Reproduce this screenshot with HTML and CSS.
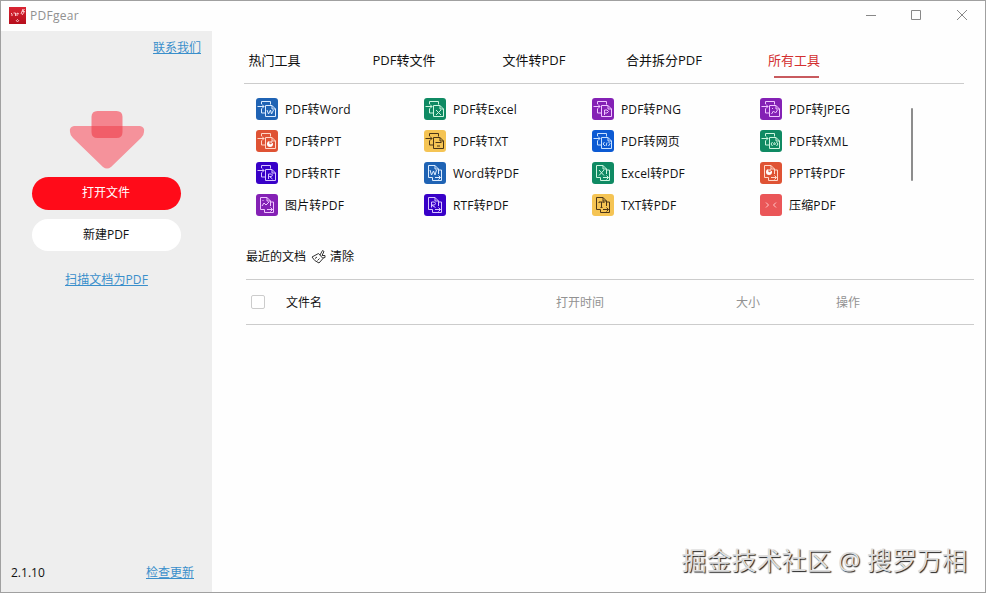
FILE: index.html
```
<!DOCTYPE html>
<html lang="zh-CN">
<head>
<meta charset="utf-8">
<title>PDFgear</title>
<link rel="stylesheet" href="styles.css">
</head>
<body>
<svg class="defs" aria-hidden="true">
  <symbol id="from-pdf" viewBox="0 0 22 22"><path d="M5.500 6V3.500H14.500V6.500M1.500 8.500H8M6 6.500l2 2-2 2M5.500 10.500v4.500h4M9.500 7.500H16L19.500 11V18.500H9.500ZM16 7.500V11h3.500"/></symbol>
  <symbol id="to-pdf" viewBox="0 0 22 22"><path d="M8.500 15.500H4.500V3.500H11L14.500 7V12M11 3.500V7h3.500M14.500 8h3V18.500H8.500V15.500M11 15.500h5.500M14.500 13.500l2 2-2 2"/></symbol>
</svg>
<div class="window">
  <header class="titlebar">
    <svg class="logo" viewBox="0 0 17 17"><defs><linearGradient id="lg" x2="0" y2="1"><stop stop-color="#d92532"/><stop offset="1" stop-color="#b60e1c"/></linearGradient></defs><path fill="url(#lg)" d="M0 0h17v17H0z"/><path d="M2 6l1 1v2M4.500 6h2v3M8 9V6l2 1M12 7l2-5M15.500 2l-2 2.500h2L13 8M8.500 12.500l1.200 1.200-1.200 1.200-1.200-1.200Z" fill="none" stroke="#ffdce0" stroke-width=".9"/></svg>
    <span class="app-name">PDFgear</span>
    <svg class="controls" viewBox="0 0 104 12"><path d="M0 6.500h10M45.500 1.500h9v9h-9zM91 1l10 10M101 1L91 11"/></svg>
  </header>
  <div class="body">
    <aside class="sidebar">
      <a class="link contact">联系我们</a>
      <svg class="arrow" viewBox="0 0 76 60"><path d="M5 16H71Q76 17 75 22Q75 25 72 28L42 57Q38 60 34 57L4 28Q1 25 1 22Q0 17 5 16Z" fill="#f5929b"/><rect x="22.500" y="1" width="31" height="15" rx="0" fill="none"/><path d="M28.500 1h19q6 0 6 6v9h-31V7q0-6 6-6Z" fill="#f4858f"/><path d="M22.500 16h31v6q0 6-6 6h-19q-6 0-6-6Z" fill="#f15e69"/></svg>
      <button class="btn open">打开文件</button>
      <button class="btn create">新建PDF</button>
      <a class="link scan">扫描文档为PDF</a>
      <div class="foot"><span>2.1.10</span><a class="link">检查更新</a></div>
    </aside>
    <main class="main">
      <nav class="tabs"><span>热门工具</span><span>PDF转文件</span><span>文件转PDF</span><span>合并拆分PDF</span><span class="active">所有工具</span></nav>
      <section class="tools">
        <div class="grid">
          <div class="tool"><svg class="ico word" viewBox="0 0 22 22"><use href="#from-pdf"/><path d="M11 12l1.500 4 2-4 1 4 2-4"/></svg><span>PDF转Word</span></div>
          <div class="tool"><svg class="ico excel" viewBox="0 0 22 22"><use href="#from-pdf"/><path d="M12 12l5 5M17 12l-5 5"/></svg><span>PDF转Excel</span></div>
          <div class="tool"><svg class="ico image" viewBox="0 0 22 22"><use href="#from-pdf"/><path d="M12.500 17v-5H15l1.500 1.500L15 15h-2.500"/></svg><span>PDF转PNG</span></div>
          <div class="tool"><svg class="ico image" viewBox="0 0 22 22"><use href="#from-pdf"/><path d="M11.500 16l2-3 2 2 2-3M12 10.500h1"/></svg><span>PDF转JPEG</span></div>
          <div class="tool"><svg class="ico ppt" viewBox="0 0 22 22"><use href="#from-pdf"/><circle class="solid" cx="14" cy="14" r="3"/><path class="cut" d="M14 14V10.500M14 14l3.500-2"/></svg><span>PDF转PPT</span></div>
          <div class="tool"><svg class="ico txt" viewBox="0 0 22 22"><use href="#from-pdf"/><path d="M11.500 12.500h6M13 16h3"/></svg><span>PDF转TXT</span></div>
          <div class="tool"><svg class="ico web" viewBox="0 0 22 22"><use href="#from-pdf"/><path d="M12.500 12L11 14l2 2M16.500 12l1.500 1.500-1.500 2.500M15 12.500L14 16"/></svg><span>PDF转网页</span></div>
          <div class="tool"><svg class="ico excel" viewBox="0 0 22 22"><use href="#from-pdf"/><path d="M12.500 12L11 14l1.500 2M16.500 12l1.500 2-1.500 2M14.500 12.500l-1 1.500 1 1 1-1z"/></svg><span>PDF转XML</span></div>
          <div class="tool"><svg class="ico rtf" viewBox="0 0 22 22"><use href="#from-pdf"/><path d="M12.500 17v-5h3l1 1-1 1.500h-2l3 2.500"/></svg><span>PDF转RTF</span></div>
          <div class="tool"><svg class="ico word" viewBox="0 0 22 22"><use href="#to-pdf"/><path d="M6 8l1.500 5L9.500 9l1.500 4 1.500-5"/></svg><span>Word转PDF</span></div>
          <div class="tool"><svg class="ico excel" viewBox="0 0 22 22"><use href="#to-pdf"/><path d="M7 8l5 5.500M12 8l-5 5.500"/></svg><span>Excel转PDF</span></div>
          <div class="tool"><svg class="ico ppt" viewBox="0 0 22 22"><use href="#to-pdf"/><circle class="solid" cx="9" cy="10" r="3"/><path class="cut" d="M9 10V7M9 10l3-2"/></svg><span>PPT转PDF</span></div>
          <div class="tool"><svg class="ico image" viewBox="0 0 22 22"><use href="#to-pdf"/><path d="M6 12l2-3 2 2 3-3M6.500 6.500h1"/></svg><span>图片转PDF</span></div>
          <div class="tool"><svg class="ico rtf" viewBox="0 0 22 22"><use href="#to-pdf"/><path d="M7.500 13.500V8h3l1 1.500-1 1.500h-3l4 2.500"/></svg><span>RTF转PDF</span></div>
          <div class="tool"><svg class="ico txt" viewBox="0 0 22 22"><use href="#to-pdf"/><path d="M7 9V8h5v1M9.500 8v5.500M8.500 13.500h2"/></svg><span>TXT转PDF</span></div>
          <div class="tool"><svg class="ico zip" viewBox="0 0 22 22"><path d="M6 8.500L8.500 11 6 13.500M16 8.500L13.500 11l2.500 2.500"/></svg><span>压缩PDF</span></div>
        </div>
        <div class="scroll"></div>
      </section>
      <div class="recent">最近的文档<svg class="broom" viewBox="0 0 16 16"><path d="M1 8L7.500 4.500l4.500 5L8 14Q3 12 1 8ZM9 6L11.500 1.500l1.500 1-2 4L14 6.500v2l-2.500.5M4 9.500L6 8M6.500 11.500L8.500 9.500"/></svg>清除</div>
      <div class="thead"><span class="check"></span><span class="name">文件名</span><span>打开时间</span><span>大小</span><span>操作</span></div>
    </main>
  </div>
  <div class="watermark">掘金技术社区 @ 搜罗万相</div>
</div>
</body>
</html>
```
FILE: styles.css
```
* { box-sizing: border-box; }
body {
  margin: 0;
  font: 12px/20px "Open Sans", "Noto Sans CJK SC", sans-serif;
  color: #111;
}
.defs { position: absolute; width: 0; height: 0; }
.window {
  position: relative;
  display: flex;
  flex-direction: column;
  width: 986px;
  height: 593px;
  border: 1px solid #a0a0a0;
  background: #fefefe;
}
.titlebar { display: flex; align-items: center; height: 30px; padding: 0 15px 0 8px; }
.logo { width: 17px; height: 17px; margin-top: -2px; }
.app-name { margin-left: 4px; color: #909090; letter-spacing: .3px; }
.controls { width: 104px; height: 12px; margin: -2px 0 0 auto; fill: none; stroke: #888; }
.body { display: flex; flex: 1; }
.sidebar {
  display: flex;
  flex-direction: column;
  align-items: center;
  width: 211px;
  padding: 7px 0 9px;
  background: #eee;
}
.link { color: #3a8fcb; text-decoration: underline; text-underline-offset: 1px; }
.contact { align-self: flex-end; margin-right: 11px; }
.arrow { width: 76px; height: 60px; margin-top: 52px; }
.btn {
  width: 149px;
  height: 33px;
  padding: 0 1px 1px 0;
  border: 0;
  border-radius: 17px;
  font: inherit;
}
.open { margin-top: 7px; background: #ff0b19; color: #fff; }
.create { height: 32px; margin-top: 9px; padding-bottom: 0; background: #fff; color: #111; }
.scan { margin-top: 19px; letter-spacing: .1px; }
.foot { display: flex; justify-content: space-between; width: 100%; margin-top: auto; padding: 0 18px 0 10px; }
.main { flex: 1; padding-left: 32px; }
.tabs {
  display: flex;
  width: 720px;
  height: 53px;
  padding-top: 19px;
  border-bottom: 1px solid #ccc;
  font-size: 13px;
}
.tabs span { width: 130px; flex: none; text-align: center; white-space: nowrap; }
.tabs span:first-child { width: 95px; padding-right: 34px; }
.tabs .active { color: #d32f2f; }
.tabs .active::after { content: ""; display: block; width: 45px; height: 2px; margin: 6px 0 0 45px; background: #c85a5e; }
.tools { display: flex; padding: 9px 0 0 12px; }
.grid { display: grid; grid-template-columns: repeat(4, 168px); grid-auto-rows: 32px; width: 655px; }
.tool { display: flex; align-items: center; height: 32px; gap: 7px; white-space: nowrap; letter-spacing: .15px; }
.tool span { padding-top: 2px; }
.ico { width: 22px; height: 22px; border-radius: 3px; fill: none; stroke: #dcecff; stroke-width: 1; }
.ico .solid { fill: #fff; stroke: none; }
.ico .cut { stroke: #dc5334; }
.word { background: #1f63b4; }
.excel { background: #0f8a63; stroke: #cdf5df; }
.image { background: #8421b5; stroke: #f0c5ff; }
.ppt { background: #df5334; stroke: #ffd8c8; }
.txt { background: #f5c454; stroke: #4b3517; }
.web { background: #0c5ad3; stroke: #c8e1ff; }
.rtf { background: #3800c8; stroke: #d8c5ff; }
.zip { background: #ea5658; stroke: #ffc9c9; }
.scroll { width: 2px; height: 73px; margin-top: 15px; background: #8d8d8d; border-radius: 1px; }
.recent { display: flex; align-items: center; height: 20px; margin: 26px 0 0 2px; }
.broom { width: 16px; height: 16px; margin: -1px 3px 0 5px; fill: none; stroke: #333; padding: 0; }
.thead {
  display: grid;
  grid-template-columns: 40px 270px 180px 100px 1fr;
  align-items: center;
  width: 728px;
  height: 46px;
  margin: 12px 0 0 2px;
  padding-top: 1px;
  border-top: 1px solid #ccc;
  border-bottom: 1px solid #ccc;
  color: #929292;
}
.check { width: 14px; height: 14px; margin: -1px 0 0 5px; border: 1px solid #ccc; border-radius: 2px; background: #fff; }
.name { color: #111; }
.watermark {
  position: absolute;
  right: 18px;
  bottom: 14px;
  font-size: 25px;
  line-height: 36px;
  white-space: nowrap;
  color: #ddd;
  text-shadow: 1px 1px 1px #222;
}
```
